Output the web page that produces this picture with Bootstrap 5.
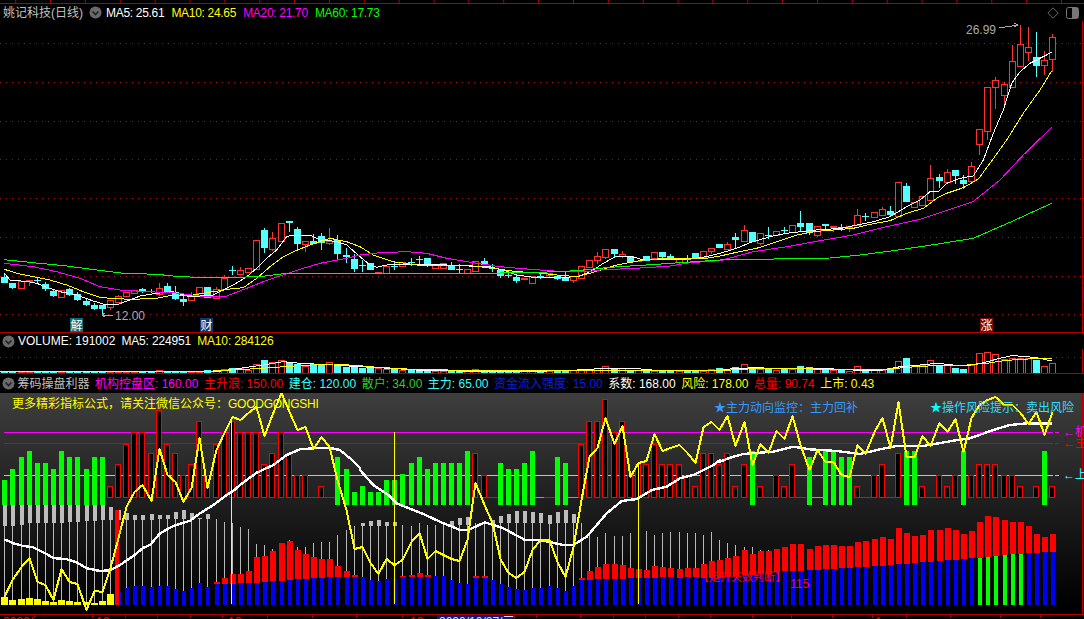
<!DOCTYPE html>
<html lang="zh">
<head>
  <meta charset="UTF-8">
  <title>姚记科技(日线)</title>
  <link href="https://cdn.jsdelivr.net/npm/bootstrap@5.3.3/dist/css/bootstrap.min.css" rel="stylesheet">
  <style>
    html, body { height: 100%; }
    body {
      background: #000;
      overflow: hidden;
      font-family: "Liberation Sans", "Noto Sans CJK SC", sans-serif;
      font-size: 12px;
      line-height: 1;
    }
    svg { display: block; }
    svg text { font-family: "Liberation Sans", "Noto Sans CJK SC", sans-serif; font-size: 12px; }
    .pane-head { white-space: nowrap; padding-left: 2px; }
    .head-main { height: 17px; padding-left: 3px; gap: 7px; }
    .head-main .ma-val { letter-spacing: -.3px; }
    .head-vol { height: 16px; gap: 6px; }
    .head-vol .ma-val { letter-spacing: -.15px; }
    .head-ind { height: 19px; gap: 5.5px; }
    .head-toggle { margin-right: -3px; flex: none; }
    .head-main .head-toggle { margin-left: -1px; margin-right: -3px; }
    .c-grey { color: #c0c0c0; }
    .c-white { color: #fff; }
    .c-yellow { color: #ff0; }
    .c-pink { color: #f0f; }
    .c-green { color: #0f0; }
    .c-dgreen { color: #2bd02b; }
    .c-red { color: #f00; }
    .c-cyan { color: #3ff; }
    .c-blue { color: #0a1ee0; }
    .head-icons { margin-left: auto; margin-right: 5px; gap: 7px; }
  </style>
</head>
<body>

  <svg width="1084" height="4" viewBox="0 0 1084 4" id="topStrip"></svg>

  <div class="pane-head head-main d-flex align-items-center">
    <span class="c-grey">姚记科技(日线)</span>
    <svg width="13" height="13" viewBox="0 0 13 13" class="head-toggle"><circle cx="6.5" cy="6.5" r="6" fill="#6a6a6a"/><path d="M3.5 5.5 6.5 8.5 9.5 5.5" fill="none" stroke="#222" stroke-width="1.6"/></svg>
    <span class="c-white ma-val">MA5: 25.61</span>
    <span class="c-yellow ma-val">MA10: 24.65</span>
    <span class="c-pink ma-val">MA20: 21.70</span>
    <span class="c-green ma-val">MA60: 17.73</span>
    <div class="head-icons d-flex align-items-center">
      <svg width="12" height="12" viewBox="0 0 12 12"><path d="M6 .8 11.2 6 6 11.2 .8 6Z" fill="none" stroke="#666"/></svg>
      <svg width="13" height="12" viewBox="0 0 13 12"><rect x=".5" y=".5" width="12" height="11" rx="2" fill="none" stroke="#777"/><rect x="6" y="1" width="6" height="10" fill="#777"/></svg>
    </div>
  </div>

  <svg width="1084" height="312" viewBox="0 21 1084 312" id="mainChart" shape-rendering="crispEdges"></svg>

  <div class="pane-head head-vol d-flex align-items-center">
    <svg width="13" height="13" viewBox="0 0 13 13" class="head-toggle"><circle cx="6.5" cy="6.5" r="6" fill="#6a6a6a"/><path d="M3.5 5.5 6.5 8.5 9.5 5.5" fill="none" stroke="#222" stroke-width="1.6"/></svg>
    <span class="c-white">VOLUME: 191002</span>
    <span class="c-white ma-val">MA5: 224951</span>
    <span class="c-yellow ma-val">MA10: 284126</span>
  </div>

  <svg width="1084" height="25" viewBox="0 349 1084 25" id="volChart" shape-rendering="crispEdges"></svg>

  <div class="pane-head head-ind d-flex align-items-center">
    <svg width="13" height="13" viewBox="0 0 13 13" class="head-toggle"><circle cx="6.5" cy="6.5" r="6" fill="#6a6a6a"/><path d="M3.5 5.5 6.5 8.5 9.5 5.5" fill="none" stroke="#222" stroke-width="1.6"/></svg>
    <span class="c-grey">筹码操盘利器</span>
    <span class="c-pink">机构控盘区: 160.00</span>
    <span class="c-red">主升浪: 150.00</span>
    <span class="c-cyan">建仓: 120.00</span>
    <span class="c-dgreen">散户: 34.00</span>
    <span class="c-cyan">主力: 65.00</span>
    <span class="c-blue">资金流入强度: 15.00</span>
    <span class="c-white">系数: 168.00</span>
    <span class="c-yellow">风险: 178.00</span>
    <span class="c-red">总量: 90.74</span>
    <span class="c-yellow">上市: 0.43</span>
  </div>

  <svg width="1084" height="226" viewBox="0 393 1084 226" id="indChart" shape-rendering="crispEdges">
    <defs>
      <linearGradient id="indBg" x1="0" y1="0" x2="0" y2="1">
        <stop offset="0" stop-color="#3e3e3e"/>
        <stop offset="1" stop-color="#000"/>
      </linearGradient>
    </defs>
    <rect x="0" y="393" width="1084" height="213" fill="url(#indBg)"/>
    <g id="indBars"></g>
    <g shape-rendering="auto">
      <text x="12" y="408" fill="#ff0">更多精彩指标公式，请关注微信公众号：</text>
      <text x="228" y="408" fill="#ff0" letter-spacing="-.25">GOODGONGSHI</text>
      <text x="714" y="412" fill="#39f">★主力动向监控：主力回补</text>
      <text x="930" y="412" fill="#3df"><tspan fill="#0ff">★</tspan>操作风险提示：卖出风险</text>
      <text x="698" y="581" fill="#f00" style="font-size:11px">【走升天数判断】</text>
      <text x="790" y="588" fill="#f00">115</text>
      <text x="1063" y="436" fill="#f0f">←机</text>
      <text x="1063" y="447" fill="#f00">←主</text>
      <text x="1063" y="479" fill="#3ff">←上</text>
      <rect x="437" y="615" width="77" height="4" fill="#0a1a80"/>
      <text x="3" y="626" fill="#f00">2020/</text>
      <text x="96" y="626" fill="#f00">10</text>
      <text x="228" y="626" fill="#f00">12</text>
      <text x="410" y="626" fill="#f00">10</text>
      <text x="439" y="626" fill="#dde">2020/10/27/三</text>
      <text x="875" y="626" fill="#f00">1</text>
    </g>
  </svg>

  <script src="https://cdn.jsdelivr.net/npm/bootstrap@5.3.3/dist/js/bootstrap.bundle.min.js"></script>
  <script>
    const NS = 'http://www.w3.org/2000/svg';
    const barX = i => Math.round(4.3 + 8.124 * i);

    function add(parent, tag, attrs, text) {
      const el = document.createElementNS(NS, tag);
      for (const k in attrs) el.setAttribute(k, attrs[k]);
      if (text) el.textContent = text;
      parent.appendChild(el);
      return el;
    }
    function line(p, x1, y1, x2, y2, color, w) {
      add(p, 'line', {x1, y1, x2, y2, stroke: color, 'stroke-width': w || 1});
    }
    function box(p, x, y, w, h, color) {
      add(p, 'rect', {x, y, width: w, height: h, fill: color});
    }
    // sets of points read off a 3x crop: [originX, originY, [zx, zy, ...]]
    function trace(p, parts, color, w) {
      const pts = [];
      parts.forEach(([ox, oy, z]) => {
        for (let i = 0; i < z.length; i += 2) pts.push((ox + z[i] / 3).toFixed(1) + ',' + (oy + z[i + 1] / 3).toFixed(1));
      });
      add(p, 'polyline', {points: pts.join(' '), fill: 'none', stroke: color, 'stroke-width': w || 1, 'stroke-linejoin': 'round'});
    }

    const RED = '#ff3232', CYAN = '#54ffff', AXIS = '#b00000';

    // candles: kind, body top, body bottom, high, low (screen y)
    const candles = [
      ['c',277,283,273,283],['c',283,288,283,289],['r',281,288],['f',280,282,280,286],['x',280,280,277,283],
      ['c',284,289,282,291],['c',291,296,289,297],['r',290,297],['c',289,295,288,296],['c',294,300,292,301],
      ['c',301,305,299,306],['c',305,309,303,310],['c',305,309,305,314],['r',300,307,300,310],['r',296,302,295,302],
      ['r',292,296],['r',290,293],['c',289,292,288,293],['x',291,291,289,293],['r',288,294,283,296],
      ['c',286,292,283,293],['c',292,299,286,300],['c',299,302,295,306],['r',296,300,292,300],['r',287,293],
      ['c',287,298],['r',289,298,287,298],['r',278,289,275,289],['x',270,270,266,275],['r',270,274,267,274],
      ['r',268,272],['r',240,269],['c',230,248,228,253],['r',238,249,232,251],['r',223,241],
      ['c',221,223,221,232],['c',229,244,227,250],['r',241,244,241,252],['c',241,244,234,244],['c',236,243,233,250],
      ['r',241,243,228,245],['c',240,254,235,260],['c',255,257,248,263],['c',259,269,254,272],['x',265,265,260,272],
      ['c',263,270],['f',272,274],['r',266,273],['x',266,266,262,270],['r',262,266],
      ['x',262,262,258,266],['x',259,259,256,264],['c',258,265,258,267],['r',264,268],['r',263,268],
      ['c',265,270,262,270],['x',269,269,264,273],['r',269,273],['r',261,271],['c',261,265,258,265],
      ['x',268,268,264,272],['c',270,276,270,278],['x',275,275,271,278],['c',277,281,275,283],['f',278,280],
      ['r',276,283],['x',276,276,272,279],['r',273,275,273,278],['c',276,279,276,280],['c',278,281,272,281],
      ['r',276,280,276,283],['r',266,278],['r',260,267],['r',256,260,252,264],['r',249,257,249,259],
      ['c',249,254,249,257],['r',254,256,251,258],['c',256,262],['f',261,262],['c',256,261],
      ['r',252,258],['c',252,257,252,260],['c',256,259,254,260],['r',259,262,259,264],['x',259,259,255,262],
      ['c',253,258],['r',251,257],['r',248,251,248,254],['c',244,248],['r',244,249,242,249],
      ['c',237,240,233,248],['r',230,241,225,241],['c',232,242],['r',233,243,233,245],['x',235,235,227,239],
      ['r',231,235],['x',230,230,227,233],['r',225,232],['c',223,227,211,231],['c',223,233,223,235],
      ['r',226,235,226,237],['c',224,226,224,230],['f',226,228,226,232],['x',227,227,224,231],['f',226,228,226,232],
      ['r',215,225,209,225],['x',216,216,213,221],['r',212,217],['r',209,215,207,215],['c',211,215,206,217],
      ['r',182,216],['c',186,202,183,202],['r',202,207],['r',196,205],['r',178,200,165,200],
      ['c',177,181,174,188],['r',172,182,169,182],['c',170,176,170,184],['c',180,184,175,189],['r',166,181,162,181],
      ['r',129,144,129,155],['r',87,131,87,140],['r',80,87,77,109],['r',84,95,82,106],['r',61,87,45,87],
      ['r',44,66,25,66],['r',47,52,27,61],['c',57,66,32,77],['r',60,65,51,75],['r',37,59,34,72]
    ];

    const main = document.getElementById('mainChart');

    [43, 82, 121, 159, 198, 237, 276, 314].forEach(y => {
      add(main, 'line', {x1: 0, y1: y + .5, x2: 1082, y2: y + .5, stroke: '#a01010', 'stroke-dasharray': '1 5'});
      line(main, 1082, y + .5, 1084, y + .5, AXIS);
    });

    candles.forEach((c, i) => {
      const x = barX(i), [k, top, bot] = c;
      const hi = c[3] === undefined ? top : c[3], lo = c[4] === undefined ? bot : c[4];
      const col = k === 'r' || k === 'f' ? RED : CYAN;
      line(main, x + .5, hi, x + .5, lo, col);
      if (k === 'r') add(main, 'rect', {x: x - 2.5, y: top + .5, width: 6, height: bot - top, fill: '#000', stroke: col});
      else if (k === 'f') box(main, x - 3, top, 7, bot - top, col);
      else if (k === 'c') box(main, x - 3, top, 7, bot - top, col);
      else box(main, x - 3, top, 7, 1, col);
    });

    trace(main, [
      [0,220,[13,160,30,180,85,185,110,190,135,200,180,215,230,225,280,243,320,255,350,254,390,240,420,228,470,220,520,215,560,228,600,228,640,225,670,210,700,195,740,170,770,145,800,115,830,90,860,50,880,45,930,45,960,60,990,62,1010,65,1040,75,1080,110]],
      [360,220,[30,135,50,142,80,135,130,133,200,133,260,135,310,135,340,140,390,140,430,150,470,165,520,172,570,172,620,172,660,168,700,150,730,130,770,108,810,108,850,120,900,118,950,120,1000,115,1040,110,1080,100]],
      [720,190,[50,175,90,158,150,140,200,130,260,123,310,118,360,116,410,105,460,95,510,80,560,50]],
      [720,0,[600,600,630,575,655,575,680,550,720,535,760,528,790,480,820,400,850,330,875,250,900,215,930,190,960,175,995,157]]
    ], '#fff');
    trace(main, [
      [0,220,[13,148,50,160,100,170,150,180,200,195,250,215,300,232,340,236,400,238,470,235,520,225,580,225,640,215,690,207,730,203,770,175,810,140,850,110,880,95,930,75,990,55,1040,65,1080,80]],
      [360,220,[40,105,100,125,170,135,260,137,330,137,400,145,470,155,530,158,590,165,650,170,700,157,770,135,850,120,920,115,990,115,1040,115,1080,108]],
      [720,190,[50,187,110,175,170,155,230,135,280,125,340,120,400,115,450,103,510,92,560,70,610,55,650,25]],
      [720,0,[680,580,730,563,775,537,810,490,860,420,910,340,960,270,995,212]]
    ], '#ff0');
    trace(main, [
      [0,220,[13,130,100,140,170,155,240,175,300,200,360,210,440,215,520,218,600,228,680,228,740,205,790,185,850,165,910,145,960,130,1040,115,1080,105]],
      [360,220,[60,98,140,95,200,100,260,115,320,125,420,140,510,148,610,155,680,155,720,150,780,147,860,143,930,138,990,128,1080,122]],
      [720,190,[100,185,200,170,300,152,400,135,500,110,600,88,700,55,760,35]],
      [720,0,[765,600,840,540,910,465,995,382]]
    ], '#f0f');
    trace(main, [
      [0,220,[13,119,100,128,200,138,290,150,370,160,470,163,540,170,640,173,780,170,850,161,1080,160]],
      [360,220,[380,162,450,157,540,157,650,152,750,142,890,133,1020,124,1080,120]],
      [720,190,[100,208,230,206,330,204,420,195,520,182,640,164,760,145,870,97,995,40]]
    ], '#0f0');

    // extreme price notes
    add(main, 'text', {x: 115, y: 320, fill: '#aaa', 'shape-rendering': 'auto'}, '12.00');
    add(main, 'path', {d: 'M113 315H102M105 313 102 315 105 317', fill: 'none', stroke: '#aaa'});
    add(main, 'text', {x: 966, y: 34, fill: '#aaa', 'shape-rendering': 'auto'}, '26.99');
    add(main, 'path', {d: 'M999 28 1018 25M1014 23 1018 25 1014 27', fill: 'none', stroke: '#aaa'});

    // event tags along the bottom of the price pane
    [[70, '解', '#0a6e70'], [200, '财', '#0a3a6e'], [980, '涨', '#7a0808']].forEach(([x, t, bg]) => {
      box(main, x, 318, 13, 14, bg);
      add(main, 'text', {x: x + .5, y: 329.5, fill: '#fff', 'shape-rendering': 'auto'}, t);
    });

    line(main, 0, 332.5, 1084, 332.5, AXIS);
    line(main, 1082.5, 21, 1082.5, 332, AXIS);
    box(main, 1083, 287, 1, 15, '#10109a');

    // top strip
    const strip = document.getElementById('topStrip');
    line(strip, 0, 3.5, 1084, 3.5, AXIS);
    for (let k = 0; k < 31; k++) line(strip, 1061.5 - 34.86 * k, 0, 1061.5 - 34.86 * k, 3, AXIS);
    line(strip, 1082.5, 3, 1082.5, 4, AXIS);

    // volume
    const vol = document.getElementById('volChart');
    const volTops = [
      372,372,372,372,372,372,372,372,372,372,372,372,372,372,372,372,372,372,372,370,372,372,372,372,372,
      370,371,369,368,368,370,364,360,362,360,363,364,366,364,364,362,364,367,367,368,366,368,369,369,370,
      370,371,371,371,371,371,370,370,369,370,371,371,371,371,371,371,371,371,371,371,370,370,369,368,366,
      368,368,370,370,371,371,370,371,371,371,371,371,369,368,369,367,364,367,369,368,370,369,369,366,367,
      369,368,370,369,371,366,369,370,370,368,361,358,366,365,360,366,365,368,369,365,353,352,354,359,358,
      358,358,360,366,363
    ];
    add(vol, 'line', {x1: 0, y1: 357.5, x2: 1082, y2: 357.5, stroke: '#a01010', 'stroke-dasharray': '1 5'});
    volTops.forEach((top, i) => {
      const x = barX(i), kind = candles[i][0];
      if (kind === 'r' || kind === 'f') {
        add(vol, 'rect', {x: x - 2.5, y: top + .5, width: 6, height: 373 - top, fill: '#000', stroke: RED});
      } else {
        box(vol, x - 3, top, 7, 373 - top, CYAN);
      }
    });
    trace(vol, [
      [0,220,[0,455,400,455,650,455,700,448,790,435,850,425,900,430,1000,435,1080,440]],
      [360,220,[90,445,200,452,500,455,650,450,740,445,820,445,900,452,1080,450]],
      [720,190,[30,537,100,533,160,535,300,535,400,540,490,540,540,530,600,525,650,520,700,525,740,527,790,518,840,505,875,497,915,499,960,505,995,513]]
    ], '#fff');
    trace(vol, [
      [0,220,[0,455,600,455,750,447,900,437,1000,432,1080,437]],
      [360,220,[40,441,140,447,300,451,550,452,1080,452]],
      [720,190,[100,536,280,537,500,538,560,532,640,527,740,525,800,520,860,511,960,505,995,505]]
    ], '#ff0');
    line(vol, 0, 373.5, 1084, 373.5, AXIS);
    line(vol, 1082.5, 349, 1082.5, 373, AXIS);

    // indicator pane
    const ind = document.getElementById('indBars');
    // upper bars: positive = red hollow from y to 497, negative = green from -y to 505, 497 = flat
    const upper = [
      -480,-469,-457,-451,-463,-463,-469,-451,-457,-457,-469,-457,-457,486,464,444,432,432,453,410,444,453,475,464,421,
      475,444,432,421,432,432,432,464,453,432,453,475,475,497,486,497,-457,-469,-492,-486,-492,-492,-480,-480,-474,
      -463,-457,-469,-463,-463,-463,-463,-451,453,475,497,-463,-469,-469,-463,-451,-497,497,-457,-463,-497,444,421,421,399,
      432,421,475,464,464,444,464,464,464,475,486,453,453,464,453,486,464,-451,486,497,475,486,464,497,-457,
      -497,-451,-451,-457,-457,486,497,475,464,497,453,-451,-451,486,497,475,486,475,-451,475,
      464,464,464,475,475,486,497,486,-451,486
    ];

    // pane guide lines go under the bars, each ending in a short dash before its label
    [[432.5, '#f0f'], [443.5, '#e00000'], [475.5, '#3ff']].forEach(([y, c]) => {
      line(ind, 4, y, 1053, y, c);
      line(ind, 1055, y, 1059, y, c);
    });

    upper.forEach((v, i) => {
      const x = barX(i);
      if (v === 497) line(ind, x - 5, 497.5, x + 6, 497.5, '#f00');
      else if (v === -497) line(ind, x - 5, 497.5, x + 6, 497.5, '#0f0');
      else if (v > 0) add(ind, 'rect', {x: x - 2.5, y: v + .5, width: 5, height: 497 - v, fill: '#000', stroke: '#f00'});
      else box(ind, x - 2, -v, 5, 505 + v, '#0f0');
    });

    // lower block: grey body top, grey body bottom, thin line top, blue top, red top
    const lowTop = z => 490 + z / 3;
    const low = [
      [45,107],[45,107],[45,104],[45,100],[45,100],[45,100],[45,98],[45,98],[45,96],[45,96],[45,93],[45,93],[45,90],[51,90],
      [60,90,0,303],[70,90,0,294],[75,90,0,288],[75,90,0,288],[72,90,0,291],[75,88,0,288],[75,88,0,288],[66,88,0,297],[60,88,0,303],[69,88,0,294],
      [84,88,0,279],[72,88,0,291],[0,0,87,282,276],[0,0,96,282,264],[0,0,100,282,252],[0,0,110,279,252],[0,0,117,279,243],[0,0,162,279,201],[0,0,165,276,198],[0,0,177,273,183],
      [0,0,160,273,159],[0,0,150,270,153],[0,0,170,267,180],[0,0,170,267,192],[0,0,158,264,201],[0,0,155,264,207],[0,0,155,261,207],[0,0,135,261,228],[0,0,120,261,243],[0,0,108,261,255],
      [100,108,0,262],[93,107,0,270],[90,107,0,273],[96,107,0,267],[96,107,0,267],[0,0,105,261,258],[0,0,108,261,255],[0,0,100,261,249],[0,0,105,261,255],[0,0,105,258],[0,0,105,258],
      [93,107,0,270],[84,105,0,279],[81,105,0,282],[0,0,100,264,258],[0,0,96,264,258],[90,105,0,270],[78,100,0,282],[72,100,0,291],[63,100,0,297],[63,100,0,300],[66,100,0,294],[69,100,0,294],[75,102,0,288],[66,100,0,294],[60,100,0,303],[72,100,0,288],
      [0,0,100,270,264],[0,0,130,270,243],[0,0,140,267,231],[0,0,130,267,222],[0,0,138,267,222],[0,0,138,267,225],[0,0,128,264,234],[0,0,125,264,237],[0,0,122,264,240],[0,0,135,264,228],[0,0,130,261,231],[0,0,126,261,234],[0,0,126,264,237],[0,0,128,261,234],[0,0,130,261,234],[0,0,135,264,222],[0,0,125,264,213],[0,0,150,264,210],
      [0,0,158,258,204],[0,0,165,258,198],[0,0,170,255,180],[0,0,170,255,192],[0,0,180,252,183],[0,0,180,252,183]
    ];
    const tail = [
      [246,177],[243,171],[243,162],[243,162],[240,177],[240,168],[237,165],[237,165],[234,168],[234,168],[231,156],[231,153],[228,147],[228,141],[225,147],
      [222,114],[222,129],[219,138],[216,135],[216,120],[213,120],[210,114],[210,120],[207,132],[204,123],[204,96],[201,78],[198,81],[195,90],[192,96],[192,96],[189,108],[189,132],[186,141],[186,132]
    ];
    tail.forEach(([b, r]) => low.push([0, 0, r, b, r]));

    const yellowBars = [321,330,327,324,327,333,336,330,333,336,336,339,333,312];

    low.forEach((row, i) => {
      const x = barX(i), [gTop, gBot, thin] = row;
      const lineTop = gBot ? lowTop(gBot) : lowTop(thin);
      if (i < 14) line(ind, x + .5, lineTop, x + .5, lowTop(yellowBars[i]), '#b8b8b8');
      else line(ind, x + .5, lineTop, x + .5, lowTop(row[3]), '#b8b8b8');
      if (gBot) box(ind, x - 1, lowTop(gTop), 4, lowTop(gBot) - lowTop(gTop), '#bdbdbd');
      if (i < 14) {
        box(ind, x - 3, lowTop(yellowBars[i]), 7, 605 - lowTop(yellowBars[i]), '#ff0');
        return;
      }
      const lowerCol = i >= 120 && i <= 125 ? '#0f0' : '#0000f0';
      box(ind, x - 1, lowTop(row[3]), 4, 605 - lowTop(row[3]), lowerCol);
      if (row[4]) box(ind, x - 2, lowTop(row[4]), 6, lowTop(row[3]) - lowTop(row[4]), '#f00');
    });
    box(ind, 115, 510, 4, 95, '#f00');

    // vertical markers
    line(ind, 231.5, 420, 231.5, 604, '#ff0', 1);
    line(ind, 394.5, 432, 394.5, 604, '#ff0', 1);
    line(ind, 638.5, 465, 638.5, 604, '#ff0', 1);

    // thick white trend line
    trace(ind, [
      [0,490,[13,148,40,160,70,168,100,172,130,187,160,204,200,208,230,217,260,235,300,243,330,241,360,225,400,198,430,173,450,165,480,130,520,108,570,92,600,70,640,45,680,15,703,0]],
      [0,370,[720,345,770,308,820,285,860,255,900,238,940,235,985,233,1020,240,1050,265,1080,295]],
      [360,370,[0,300,40,345,85,375]],
      [360,490,[110,40,190,72,250,100,300,120,325,120,375,97,430,115,495,150,540,150,610,165,640,165,680,140,740,70,785,33,830,27,875,0]],
      [360,370,[920,350,960,325,1000,315,1060,285,1080,270]],
      [720,370,[0,275,30,263,70,252,120,248,160,245,220,230,270,238,350,243,420,252,480,238,530,228,610,228,700,212,750,205,820,180,870,165,920,160,995,161]]
    ], '#fff', 2.4);

    // thick yellow zigzag, one value per bar
    const zig = [
      597,580,567,558,582,585,600,569,582,584,610,591,592,568,538,507,492,485,501,449,475,482,502,488,438,
      488,450,433,417,420,413,407,436,415,393,412,430,427,449,437,447,480,510,549,547,563,574,559,565,560,
      542,533,559,551,555,559,561,540,483,505,523,559,573,578,572,550,540,540,562,577,547,500,457,448,418,
      444,426,477,463,461,434,451,448,445,453,463,427,422,430,416,446,422,465,444,453,431,439,416,445,470,
      450,462,462,475,477,445,454,432,418,448,402,457,457,436,446,423,432,419,452,418,405,400,397,405,405,
      413,424,412,435,412
    ];
    add(ind, 'polyline', {
      points: zig.map((y, i) => barX(i) + .5 + ',' + y).join(' '),
      fill: 'none', stroke: '#ff0', 'stroke-width': 2, 'stroke-linejoin': 'round'
    });

    // axis frame and date ticks
    line(ind, 1082.5, 393, 1082.5, 614, AXIS);
    line(ind, 0, 614.5, 1084, 614.5, AXIS);
    [34, 92, 125, 157, 190, 222, 267, 312, 356, 402, 437, 514, 536, 580, 613, 645, 678, 710, 752, 791, 832, 872, 906, 950, 1000, 1040].forEach(x => {
      line(ind, x + .5, 615, x + .5, 618, AXIS);
    });
  </script>
</body>
</html>
